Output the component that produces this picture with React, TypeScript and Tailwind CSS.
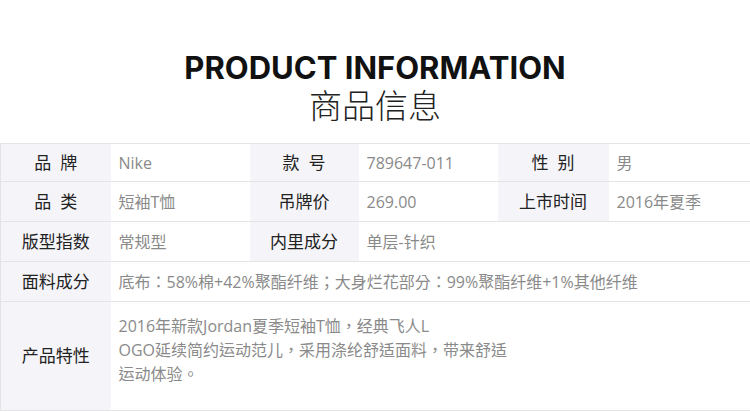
import React from 'react';

const cjk = '"Open Sans", "Noto Sans CJK TC", sans-serif';

interface Pair {
  label: string;
  value: string;
}

const rows: Pair[][] = [
  [
    { label: '品\u00a0\u00a0牌', value: 'Nike' },
    { label: '款\u00a0\u00a0号', value: '789647-011' },
    { label: '性\u00a0\u00a0别', value: '男' },
  ],
  [
    { label: '品\u00a0\u00a0类', value: '短袖T恤' },
    { label: '吊牌价', value: '269.00' },
    { label: '上市时间', value: '2016年夏季' },
  ],
];

function Label({ children, className = '' }: { children: React.ReactNode; className?: string }) {
  return (
    <td
      className={`bg-[#f5f5f9] text-center text-[17px] text-[#222] p-0 ${className}`}
      style={{ fontFamily: '"Open Sans", "Noto Sans CJK SC", sans-serif' }}
    >
      {children}
    </td>
  );
}

function Value({ children, colSpan, className = '' }: { children: React.ReactNode; colSpan?: number; className?: string }) {
  return (
    <td colSpan={colSpan} className={`bg-white text-left text-[16px] text-[#8a8a8a] pl-2 p-0 ${className}`}>
      {children}
    </td>
  );
}

export default function App() {
  return (
    <div className="w-[750px] h-[412px] bg-white overflow-hidden" style={{ fontFamily: cjk }}>
      {/* Heading */}
      <div className="pt-[50px] flex flex-col items-center">
        <h1
          className="text-[31px] leading-[36px] font-bold text-[#111] tracking-normal"
          style={{ fontFamily: '"Inter", "Noto Sans", sans-serif' }}
        >
          PRODUCT INFORMATION
        </h1>
        <h2
          className="text-[33px] leading-[36px] font-light text-[#222]"
          style={{ fontFamily: '"Noto Sans CJK SC", sans-serif' }}
        >
          商品信息
        </h2>
      </div>

      {/* Spec table */}
      <table className="mt-[21px] w-[750px] border-collapse table-fixed border border-[#e4e4e4]">
        <colgroup>
          <col className="w-[110px]" />
          <col className="w-[139px]" />
          <col className="w-[109px]" />
          <col className="w-[139px]" />
          <col className="w-[111px]" />
          <col className="w-[142px]" />
        </colgroup>
        <tbody>
          {rows.map((row, i) => (
            <tr key={i} className={`${i === 0 ? 'h-[38px]' : 'h-[40px]'} border-b border-[#e4e4e4]`}>
              {row.map((p) => (
                <React.Fragment key={p.label}>
                  <Label>{p.label}</Label>
                  <Value>{p.value}</Value>
                </React.Fragment>
              ))}
            </tr>
          ))}
          <tr className="h-[40px] border-b border-[#e4e4e4]">
            <Label>版型指数</Label>
            <Value>常规型</Value>
            <Label>内里成分</Label>
            <Value colSpan={3}>单层-针织</Value>
          </tr>
          <tr className="h-[40px] border-b border-[#e4e4e4]">
            <Label>面料成分</Label>
            <Value colSpan={5}>底布：58%棉+42%聚酯纤维；大身烂花部分：99%聚酯纤维+1%其他纤维</Value>
          </tr>
          <tr className="h-[109px]">
            <Label>产品特性</Label>
            <Value colSpan={5} className="align-top pt-[12px] leading-[24px]">
              2016年新款Jordan夏季短袖T恤，经典飞人L
              <br />
              OGO延续简约运动范儿，采用涤纶舒适面料，带来舒适
              <br />
              运动体验。
            </Value>
          </tr>
        </tbody>
      </table>
    </div>
  );
}
